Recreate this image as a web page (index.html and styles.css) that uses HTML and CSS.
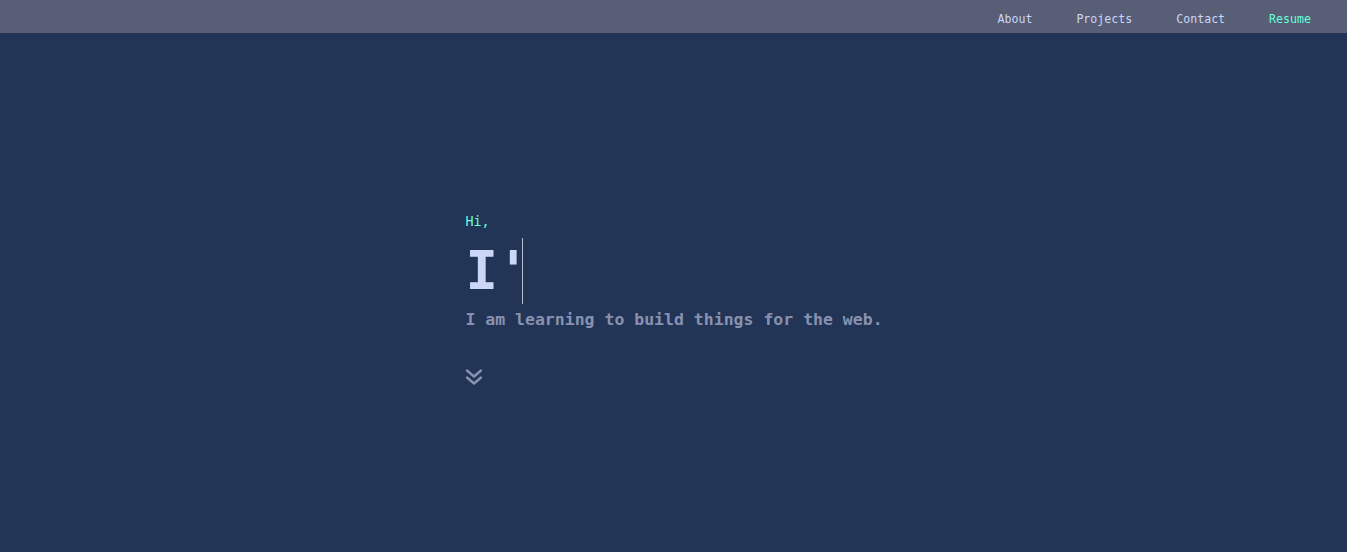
FILE: index.html
```html
<!DOCTYPE html>
<html lang="en">
<head>
<meta charset="utf-8">
<title>Portfolio</title>
<link rel="stylesheet" href="styles.css">
</head>
<body>
<header class="nav">
  <a class="nav-link" href="#about">About</a>
  <a class="nav-link" href="#projects">Projects</a>
  <a class="nav-link" href="#contact">Contact</a>
  <a class="nav-link nav-accent" href="#resume">Resume</a>
</header>
<main class="hero">
  <div class="hero-inner">
    <p class="greet">Hi,</p>
    <h1 class="title"><span>I'</span><span class="cursor"></span></h1>
    <p class="sub">I am learning to build things for the web.</p>
    <svg class="chev" width="18" height="18" viewBox="0 0 18 18" fill="none" stroke="currentColor" stroke-width="2.4" stroke-linecap="round" stroke-linejoin="round">
      <path d="M2 2.5 L9 8.5 L16 2.5"/>
      <path d="M2 9.5 L9 15.5 L16 9.5"/>
    </svg>
  </div>
</main>
</body>
</html>
```
FILE: styles.css
```css
* { box-sizing: border-box; }
html, body { margin: 0; padding: 0; }
body {
  background: #233556;
  font-family: "DejaVu Sans Mono", "Liberation Mono", monospace;
  min-height: 552px;
}
.nav {
  height: 33px;
  background: #575e75;
  display: flex;
  justify-content: flex-end;
  align-items: center;
  gap: 44px;
  padding: 5px 36px 0 0;
}
.nav-link {
  color: #ccd6f6;
  text-decoration: none;
  font-size: 11.6px;
}
.nav-accent { color: #64ffda; }
.hero {
  display: flex;
  justify-content: center;
  padding-top: 181px;
}
.hero-inner {
  display: flex;
  flex-direction: column;
  align-items: flex-start;
  padding-left: 1px;
}
.greet {
  margin: 0;
  color: #64ffda;
  font-size: 13.4px;
  line-height: 16px;
}
.title {
  margin: 8px 0 0 0;
  display: flex;
  align-items: stretch;
  color: #ccd6f6;
  font-size: 54px;
  line-height: 66px;
  font-weight: 700;
  height: 66px;
}
.title span:first-child { letter-spacing: -1px; }
.cursor {
  width: 1px;
  background: #b8bdcc;
  margin-left: -6px;
}
.sub {
  margin: 6px 0 0 0;
  color: #8892b0;
  font-size: 16.5px;
  font-weight: 700;
  line-height: 20px;
}
.chev {
  margin-top: 38px;
  color: #8892b0;
}
```
